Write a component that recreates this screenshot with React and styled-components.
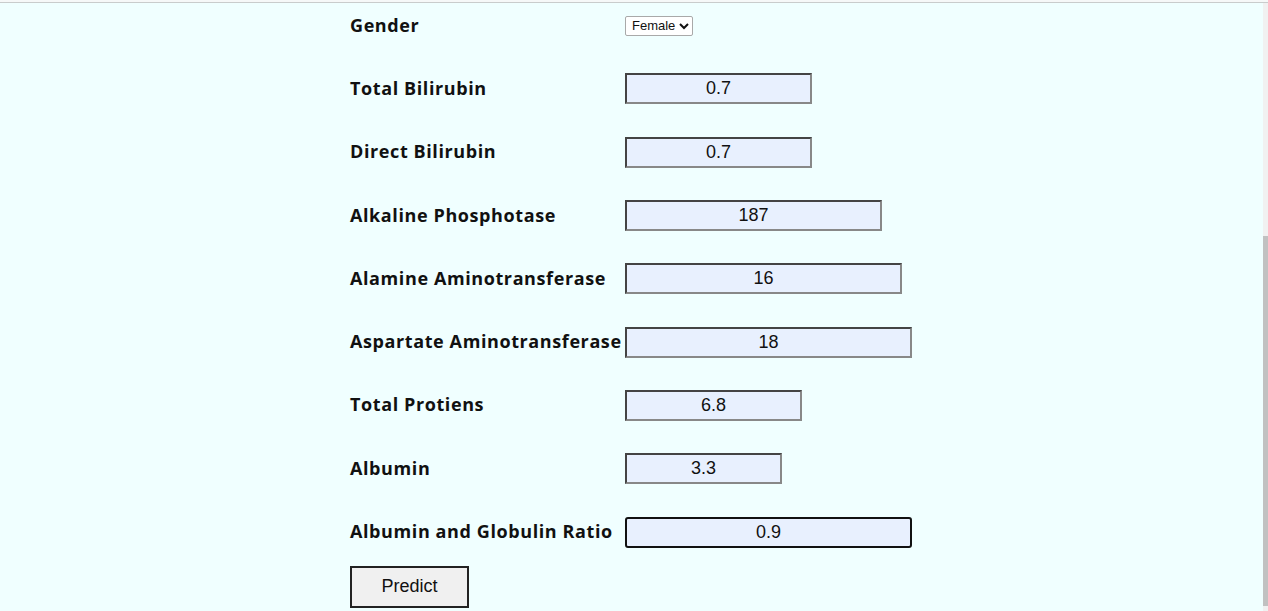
import React from "react";
import styled, { createGlobalStyle } from "styled-components";

const Global = createGlobalStyle`
  html, body { margin: 0; padding: 0; background: #f0ffff; overflow: hidden; }
  body { font-family: "Liberation Sans", Arial, sans-serif; }
`;

const Page = styled.div`
  min-height: 611px;
  box-sizing: border-box;
  border-top: 1px solid #c9cccc;
  margin-top: 2px;
  background: #f0ffff;
`;

const TopStrip = styled.div`
  position: fixed;
  top: 0; left: 0; right: 0;
  height: 2px;
  background: #f6f8f8;
`;

const Form = styled.form`
  display: grid;
  grid-template-columns: 275px auto;
  grid-auto-rows: 63.3px;
  align-items: center;
  justify-items: start;
  margin-left: 350px;
  margin-top: -10px;
`;

const Label = styled.label`
  font-family: "Open Sans", "Noto Sans", sans-serif;
  font-weight: 700;
  font-size: 18px;
  letter-spacing: 0.6px;
  color: #111;
  white-space: nowrap;
`;

const Select = styled.select`
  font-family: "Liberation Sans", Arial, sans-serif;
  font-size: 13px;
  height: 20px;
  width: 68px;
  padding: 0 0 0 2px;
  border: 1px solid #a9a9a9;
  border-radius: 2px;
  background: #fff;
  color: #111;
  margin-top: 2px;
`;

const Field = styled.input`
  box-sizing: border-box;
  height: 31px;
  margin-top: 2px;
  width: ${(p) => p.$w}px;
  font-family: "Liberation Sans", Arial, sans-serif;
  font-size: 18px;
  color: #111;
  text-align: center;
  background: #e8f0fe;
  padding: 0;
  border: 2px solid;
  border-color: ${(p) => (p.$focus ? "#111" : "#444 #888 #888 #444")};
  border-radius: ${(p) => (p.$focus ? "3px" : "0")};
  outline: none;
`;

const Button = styled.button`
  box-sizing: border-box;
  align-self: start;
  width: 119px;
  height: 42px;
  font-family: "Liberation Sans", Arial, sans-serif;
  font-size: 18px;
  color: #111;
  background: #f0f0f0;
  border: 2px solid #222;
  margin-top: 3px;
`;

const Scrollbar = styled.div`
  position: fixed;
  top: 3px; right: 0; bottom: 0;
  width: 5px;
  background: #f1f1f1;
`;

const Thumb = styled.div`
  position: absolute;
  left: 0; right: 0;
  top: 233px;
  height: 370px;
  background: #c1c1c1;
`;

const fields = [
  ["Total Bilirubin", "0.7", 187],
  ["Direct Bilirubin", "0.7", 187],
  ["Alkaline Phosphotase", "187", 257],
  ["Alamine Aminotransferase", "16", 277],
  ["Aspartate Aminotransferase", "18", 287],
  ["Total Protiens", "6.8", 177],
  ["Albumin", "3.3", 157],
  ["Albumin and Globulin Ratio", "0.9", 287, true],
];

export default function App() {
  return (
    <>
      <Global />
      <TopStrip />
      <Page>
        <Form onSubmit={(e) => e.preventDefault()}>
          <Label>Gender</Label>
          <Select defaultValue="Female">
            <option>Male</option>
            <option>Female</option>
          </Select>
          {fields.map(([label, value, w, focus]) => (
            <React.Fragment key={label}>
              <Label>{label}</Label>
              <Field defaultValue={value} $w={w} $focus={focus} />
            </React.Fragment>
          ))}
          <Button type="submit">Predict</Button>
        </Form>
      </Page>
      <Scrollbar>
        <Thumb />
      </Scrollbar>
    </>
  );
}
